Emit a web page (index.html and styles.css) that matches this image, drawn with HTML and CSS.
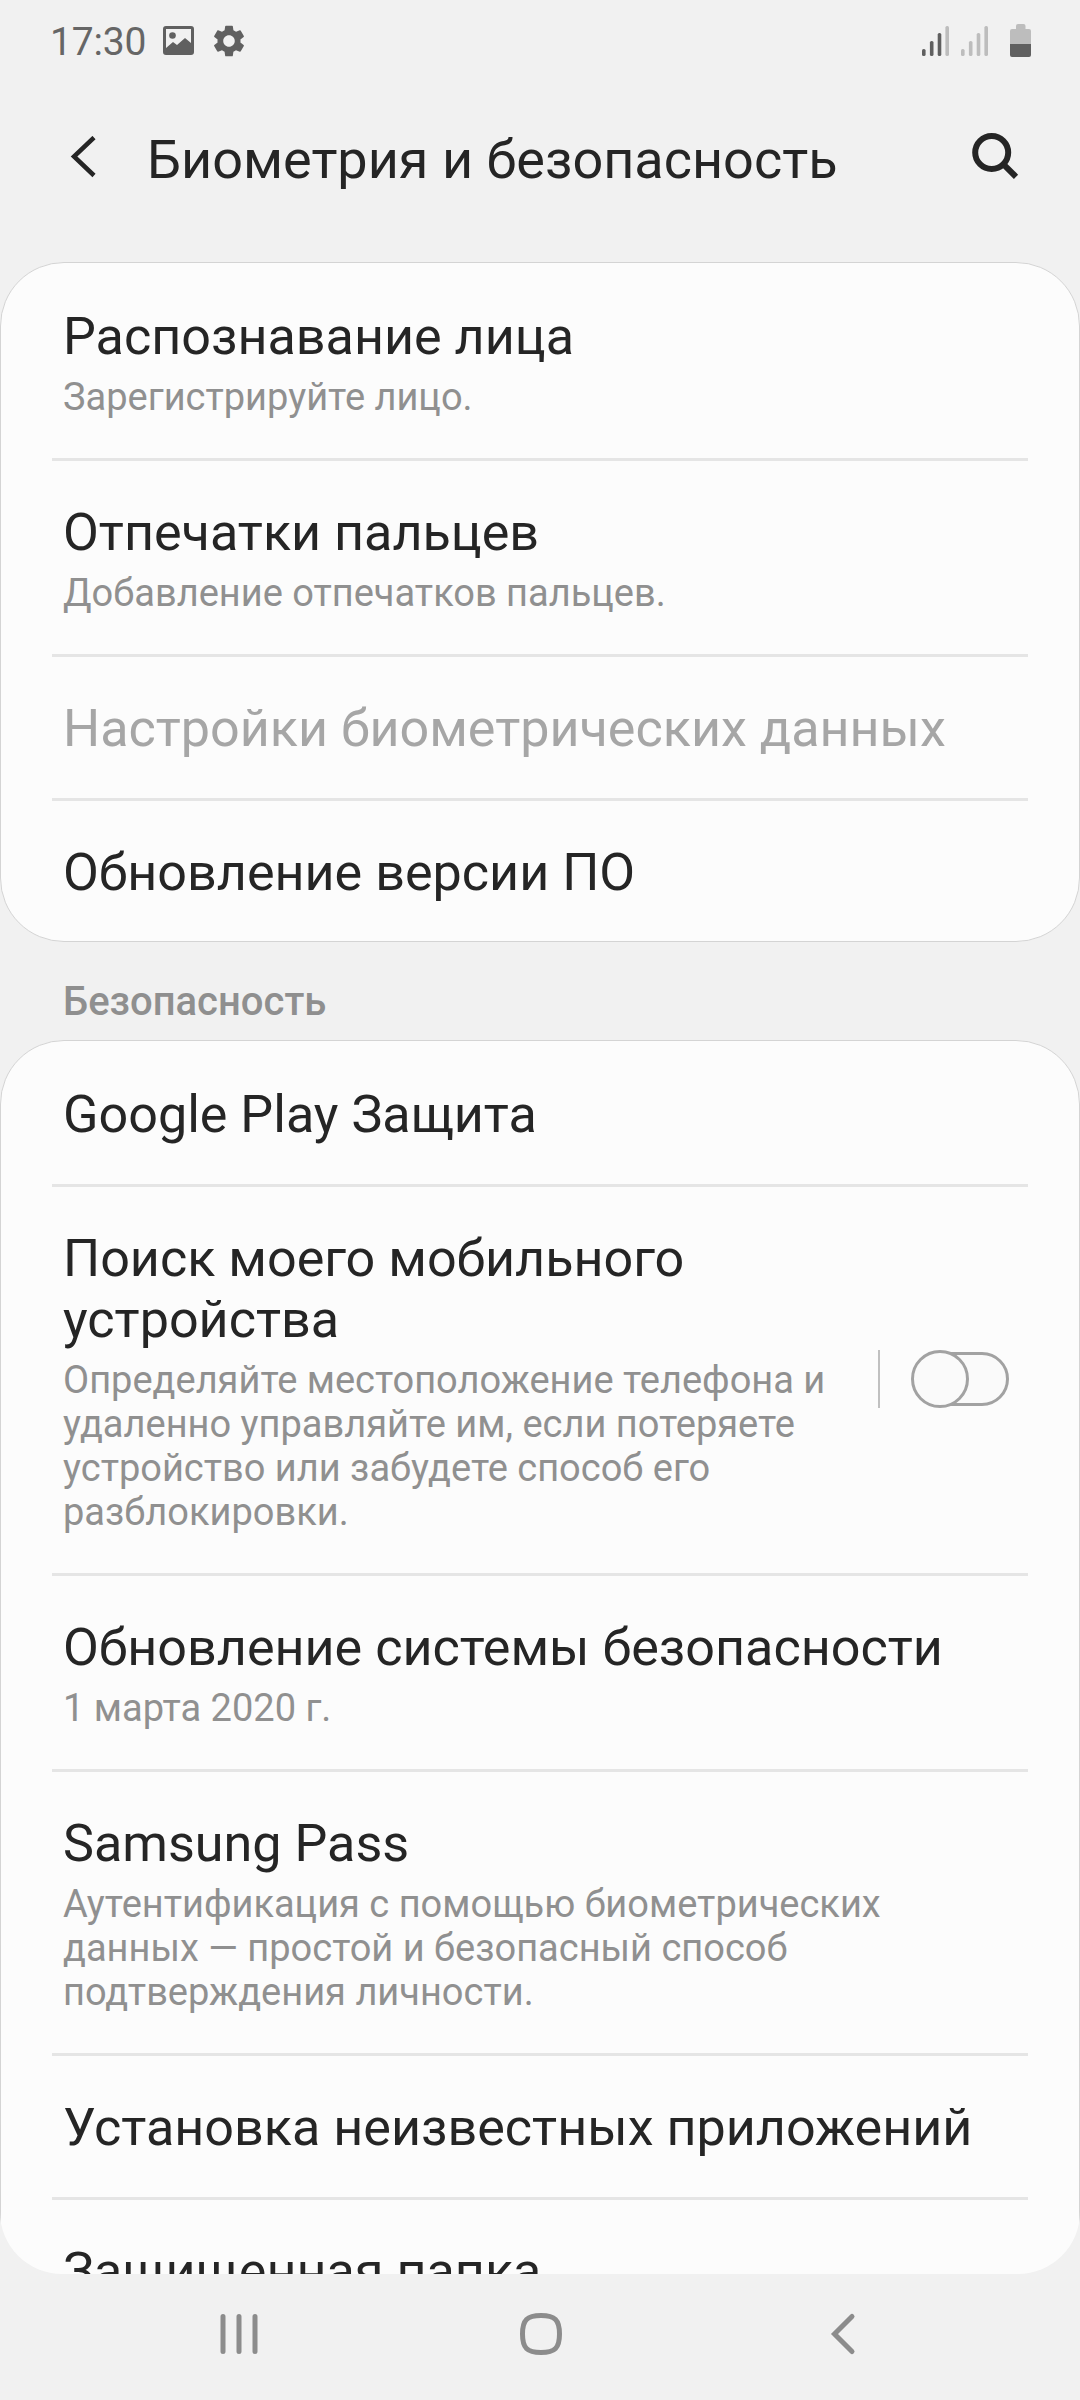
FILE: index.html
```html
<!DOCTYPE html>
<html lang="ru">
  <head>
    <meta charset="UTF-8" />
    <meta name="viewport" content="width=device-width, initial-scale=1.0" />
    <title>Биометрия и безопасность</title>
    <link rel="stylesheet" href="styles.css">
  </head>
  <body>
    <div class="screen">
      <div class="status-bar">
        <span class="clock">17:30</span>
        <svg class="image-icon" width="32" height="30" viewBox="0 0 32 30">
          <path fill-rule="evenodd" d="M3 0h25a3 3 0 0 1 3 3v23a3 3 0 0 1-3 3H3a3 3 0 0 1-3-3V3a3 3 0 0 1 3-3zM3 3v19l7-6 4 3 8-7 6 5V3z" />
          <circle cx="9.5" cy="9.5" r="3.3" />
        </svg>
        <svg class="gear-icon" width="32" height="32" viewBox="2 2 20 20">
          <path d="M19.14 12.94c.04-.3.06-.61.06-.94 0-.32-.02-.64-.07-.94l2.03-1.58a.49.49 0 0 0 .12-.61l-1.92-3.32a.488.488 0 0 0-.59-.22l-2.39.96c-.5-.38-1.03-.7-1.62-.94l-.36-2.54a.484.484 0 0 0-.48-.41h-3.84c-.24 0-.43.17-.47.41l-.36 2.54c-.59.24-1.13.57-1.62.94l-2.39-.96c-.22-.08-.47 0-.59.22L2.74 8.87c-.12.21-.08.47.12.61l2.03 1.58c-.05.3-.09.63-.09.94s.02.64.07.94l-2.03 1.58a.49.49 0 0 0-.12.61l1.92 3.32c.12.22.37.29.59.22l2.39-.96c.5.38 1.03.7 1.62.94l.36 2.54c.05.24.24.41.48.41h3.84c.24 0 .44-.17.47-.41l.36-2.54c.59-.24 1.13-.56 1.62-.94l2.39.96c.22.08.47 0 .59-.22l1.92-3.32c.12-.22.07-.47-.12-.61l-2.01-1.58zM12 15.6c-1.98 0-3.6-1.62-3.6-3.6s1.62-3.6 3.6-3.6 3.6 1.62 3.6 3.6-1.62 3.6-3.6 3.6z" />
        </svg>
        <div class="status-right">
          <svg width="27" height="34" viewBox="0 0 27 34">
            <rect x="0" y="25" width="3.6" height="7" rx="1.6" />
            <rect x="7.9" y="17" width="3.6" height="15" rx="1.6" />
            <rect x="15.7" y="9" width="3.6" height="23" rx="1.6" />
            <rect class="dim" x="23.4" y="2" width="3.6" height="30" rx="1.6" />
          </svg>
          <svg class="dim" width="27" height="34" viewBox="0 0 27 34">
            <rect x="0" y="25" width="3.6" height="7" rx="1.6" />
            <rect x="7.9" y="17" width="3.6" height="15" rx="1.6" />
            <rect x="15.7" y="9" width="3.6" height="23" rx="1.6" />
            <rect x="23.4" y="2" width="3.6" height="30" rx="1.6" />
          </svg>
          <svg class="battery-icon" width="21" height="34" viewBox="0 0 21 34">
            <path class="dim" d="M6 5V2q0-2 2-2h5.500q2 0 2 2v3H19q2 0 2 2v13H0V7q0-2 2-2z" />
            <path d="M0 20h21v11q0 2-2 2H2q-2 0-2-2z" />
          </svg>
        </div>
      </div>

      <div class="header">
        <svg class="back-icon" width="30" height="48" viewBox="0 0 30 48">
          <path d="M24 1.500 4 20.500 24 39.500" />
        </svg>
        <div class="header-title">Биометрия и безопасность</div>
        <svg class="search-icon" width="50" height="60" viewBox="0 0 50 60">
          <circle cx="21.700" cy="22.500" r="16.500" />
          <path d="M33.500 34.300 46 46.800" />
        </svg>
      </div>

      <div class="content">
        <div class="card">
          <div class="item">
            <div class="item-title">Распознавание лица</div>
            <div class="item-summary">Зарегистрируйте лицо.</div>
          </div>
          <div class="item">
            <div class="item-title">Отпечатки пальцев</div>
            <div class="item-summary">Добавление отпечатков пальцев.</div>
          </div>
          <div class="item disabled">
            <div class="item-title">Настройки биометрических данных</div>
          </div>
          <div class="item">
            <div class="item-title">Обновление версии ПО</div>
          </div>
        </div>

        <div class="section-title">Безопасность</div>

        <div class="card">
          <div class="item">
            <div class="item-title">Google Play Защита</div>
          </div>
          <div class="item with-switch">
            <div class="item-text">
              <div class="item-title">Поиск моего мобильного устройства</div>
              <div class="item-summary">Определяйте местоположение телефона и удаленно управляйте им, если потеряете устройство или забудете способ его разблокировки.</div>
            </div>
            <div class="switch-box">
              <svg width="98" height="58" viewBox="0 0 98 58">
                <rect x="10" y="3.500" width="86.500" height="51" rx="25.500" />
                <circle cx="29" cy="29" r="27.500" />
              </svg>
            </div>
          </div>
          <div class="item">
            <div class="item-title">Обновление системы безопасности</div>
            <div class="item-summary">1 марта 2020 г.</div>
          </div>
          <div class="item">
            <div class="item-title">Samsung Pass</div>
            <div class="item-summary">Аутентификация с помощью биометрических данных — простой и безопасный способ подтверждения личности.</div>
          </div>
          <div class="item">
            <div class="item-title">Установка неизвестных приложений</div>
          </div>
          <div class="item">
            <div class="item-title">Защищенная папка</div>
          </div>
        </div>
      </div>

      <div class="nav-bar">
        <svg width="44" height="44" viewBox="0 0 44 44">
          <path d="M6 4.500v35M22 4.500v35M38 4.500v35" />
        </svg>
        <svg width="44" height="44" viewBox="0 0 44 44">
          <path d="M22 3.500c14 0 18.500 4.500 18.500 18.500S36 40.500 22 40.500 3.500 36 3.500 22 8 3.500 22 3.500z" />
        </svg>
        <svg width="44" height="44" viewBox="0 0 44 44">
          <path d="M31 4.500 13.500 22 31 39.500" />
        </svg>
      </div>
    </div>
  </body>
</html>
```

FILE: styles.css
```css
* {
  box-sizing: border-box;
  margin: 0;
  padding: 0;
}

body {
  font-family: Roboto, 'Noto Sans', sans-serif;
  background-color: #f1f1f1;
  color: #252525;
}

svg {
  display: block;
  flex-shrink: 0;
}

.screen {
  display: flex;
  flex-direction: column;
  width: 1080px;
  height: 2400px;
  overflow: hidden;
}

/* Status bar */
.status-bar {
  display: flex;
  align-items: center;
  height: 81px;
  padding: 0 49px 0 50px;
  color: #666;
  fill: #606060;
}

.clock {
  font-size: 39px;
  line-height: 81px;
  letter-spacing: -0.2px;
  padding-top: 4px;
  width: 113px;
}

.gear-icon {
  margin-left: 18px;
}

.status-right {
  display: flex;
  align-items: center;
  gap: 12px;
  margin-left: auto;
}

.battery-icon {
  margin-left: 10px;
}

.dim {
  fill: #bdbdbd;
}

/* Header */
.header {
  display: flex;
  align-items: center;
  height: 158px;
  padding: 0 60px 0 70px;
}

.back-icon,
.search-icon {
  fill: none;
  stroke: #252525;
}

.back-icon {
  stroke-width: 4.5;
}

.search-icon {
  stroke-width: 6;
  margin-left: auto;
}

.header-title {
  font-size: 54px;
  line-height: 64px;
  margin-left: 47px;
  white-space: nowrap;
}

/* Settings list */
.content {
  height: 2035px;
  padding-top: 23px;
  overflow: hidden;
  border-radius: 0 0 62px 62px;
}

.card {
  background-color: #fcfcfc;
  border: 1px solid #d4d4d4;
  border-radius: 64px;
  padding: 2px 51px 0;
}

.item {
  padding: 41px 11px 39px;
  border-bottom: 3px solid #e5e5e5;
}

.item:last-child {
  border-bottom: none;
  padding-bottom: 38px;
}

.item-title {
  font-size: 52.1px;
  line-height: 61px;
}

.item-summary {
  font-size: 38px;
  line-height: 44px;
  margin-top: 8px;
  color: #909090;
}

.disabled .item-title {
  color: #a6a6a6;
}

.section-title {
  font-size: 40px;
  font-weight: 500;
  line-height: 46px;
  padding: 37px 63px 15px;
  color: #8f8f8f;
}

.with-switch {
  display: flex;
  align-items: center;
}

.item-text {
  width: 780px;
}

.switch-box {
  margin-left: auto;
  margin-right: 8px;
  margin-bottom: 5px;
  border-left: 2px solid #c0c0c0;
  padding-left: 31px;
}

.switch-box svg {
  fill: #fafafa;
  stroke: #a2a2a2;
  stroke-width: 3;
}

/* Bottom navigation */
.nav-bar {
  display: flex;
  justify-content: space-between;
  height: 126px;
  padding: 38px 215px 0 217px;
  fill: none;
  stroke: #8c8c8c;
  stroke-width: 5;
  stroke-linecap: round;
}
```
